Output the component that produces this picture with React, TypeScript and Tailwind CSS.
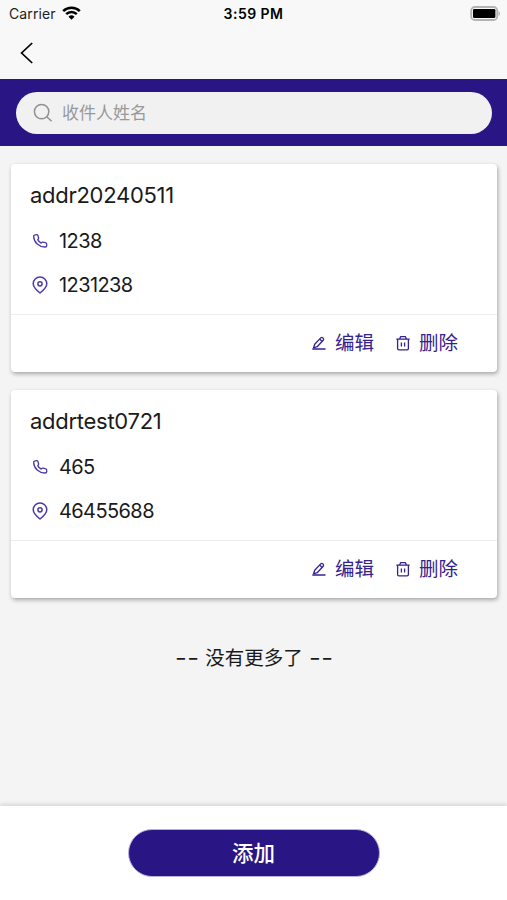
import React from 'react';

interface Address {
  id: number;
  name: string;
  phone: string;
  detail: string;
}

const addresses: Address[] = [
  { id: 1, name: 'addr20240511', phone: '1238', detail: '1231238' },
  { id: 2, name: 'addrtest0721', phone: '465', detail: '46455688' },
];

function StatusBar() {
  return (
    <div className="grid h-7 grid-cols-3 items-center pl-[9px] pr-[6px] text-black">
      <div className="flex items-center gap-[6px]">
        <span className="text-[14px] leading-7 tracking-[0.1px] text-[#222]">Carrier</span>
        <svg className="mb-[2px]" width="19" height="14" viewBox="0 0 19 14" fill="none" stroke="currentColor" strokeWidth="2.5">
          <path d="M1.2 5.1a11.8 11.8 0 0 1 16.6 0" />
          <path d="M4.2 8.2a7.5 7.5 0 0 1 10.6 0" />
          <path d="M9.5 13.8 6.5 10.7a4.3 4.3 0 0 1 6 0z" fill="currentColor" stroke="none" />
        </svg>
      </div>
      <span className="-ml-[3px] text-center text-[14px] leading-7 font-semibold tracking-[0.45px]">3:59 PM</span>
      <svg className="mb-[2px] justify-self-end" width="31" height="15" viewBox="0 0 31 15">
        <rect x="1.2" y="1" width="26" height="13" rx="3.6" fill="#f8f8f8" stroke="#b3b3b3" strokeWidth="1.8" />
        <rect x="3" y="3" width="22.4" height="9" rx="1.2" fill="#000" />
        <path d="M28.5 5.2c2 .8 2 3.8 0 4.6z" fill="#b3b3b3" />
      </svg>
    </div>
  );
}

function PhoneIcon() {
  return (
    <svg width="16" height="16" viewBox="0 0 16 16" fill="none" stroke="currentColor" strokeWidth="1.3" strokeLinejoin="round">
      <path d="M2.4 2.1 4.6 1.6Q5.5 1.5 5.8 2.3L6.6 4.8Q6.8 5.5 6.3 6L5.7 6.6Q6.8 8.9 9.2 10.1L9.9 9.4Q10.5 9 11.2 9.2L13.8 9.9Q14.7 10.2 14.7 11.1V12.6Q14.6 13.9 13.2 14C7 14.2 2 9.5 1.6 3.4Q1.6 2.4 2.4 2.1Z" />
    </svg>
  );
}

function PinIcon() {
  return (
    <svg width="16" height="18" viewBox="0 0 16 18" fill="none" stroke="currentColor" strokeWidth="1.5" strokeLinejoin="round">
      <path d="M8 17Q1.2 11.9 1.2 7.6a6.8 6.6 0 0 1 13.6 0Q14.8 11.9 8 17Z" />
      <circle cx="8" cy="7.8" r="2.1" />
    </svg>
  );
}

function EditIcon() {
  return (
    <svg className="mb-[2px]" width="16" height="16" viewBox="0 0 16 16" fill="none" stroke="currentColor" strokeWidth="1.3" strokeLinejoin="round">
      <path d="M2.6 12.8 3.7 9.3 9.7 2.9Q10.7 2 11.7 2.8L12.3 3.4Q13 4.3 12.2 5.2L6.2 11.7Z" />
      <path d="m8.8 4.2 2.3 2.2M1.3 14h13.2" />
    </svg>
  );
}

function TrashIcon() {
  return (
    <svg className="mb-[2px]" width="16" height="16" viewBox="0 0 16 16" fill="none" stroke="currentColor" strokeWidth="1.3" strokeLinejoin="round">
      <path d="M1.3 4.2h13.4M4.6 4 5.7 1.6h4.6L11.4 4M2.6 4.4v9.2Q2.6 14.9 3.9 14.9h8.2q1.3 0 1.3-1.3V4.4M6.4 7.4v4.2M9.6 7.4v4.2" />
    </svg>
  );
}

function AddressCard({ address }: { address: Address }) {
  return (
    <div className="h-[208px] rounded-[4px] bg-white shadow-[1px_2px_4px_rgba(0,0,0,0.32)]">
      <div className="flex h-[151px] flex-col border-b border-[#eeeeee] pl-5 pt-[15px]">
        <h2 className="-ml-px text-[22px] leading-8 tracking-[-0.28px] text-[#1a1a1a]">{address.name}</h2>
        <div className="mt-[8px] flex h-11 items-center gap-[10px]">
          <span className="flex w-[18px] justify-center text-[#4b3ca5]">
            <PhoneIcon />
          </span>
          <span className="text-[20px] tracking-[-0.6px] text-[#1a1a1a]">{address.phone}</span>
        </div>
        <div className="flex h-11 items-center gap-[10px]">
          <span className="flex w-[18px] justify-center text-[#4b3ca5]">
            <PinIcon />
          </span>
          <span className="text-[20px] tracking-[-0.6px] text-[#1a1a1a]">{address.detail}</span>
        </div>
      </div>
      <div className="flex h-[57px] items-center justify-end gap-[21px] pr-[39px] text-[#35228f]">
        <button className="flex items-center gap-2 text-[19.5px]">
          <EditIcon />
          <span className="pt-px">编辑</span>
        </button>
        <button className="flex items-center gap-2 text-[19.5px]">
          <TrashIcon />
          <span className="pt-px">删除</span>
        </button>
      </div>
    </div>
  );
}

export default function App() {
  return (
    <div className="flex h-[900px] w-[507px] flex-col overflow-hidden bg-[#f4f4f4] font-['Inter','Noto_Sans_CJK_SC',sans-serif]">
      <header className="h-[79px] shrink-0 bg-[#f8f8f8]">
        <StatusBar />
        <button className="ml-5 mt-[14px] block text-black">
          <svg width="14" height="22" viewBox="0 0 14 22" fill="none" stroke="currentColor" strokeWidth="1.7">
            <path d="M12.2 1 1.6 11l10.6 10" />
          </svg>
        </button>
      </header>

      {/* Search */}
      <div className="h-[67px] shrink-0 bg-[#2a1585] pl-4 pr-[15px] pt-[13px]">
        <div className="flex h-[42px] items-center gap-[10px] rounded-full bg-[#f1f1f1] pl-[17px]">
          <svg width="20" height="20" viewBox="0 0 20 20" fill="none" stroke="#909090" strokeWidth="1.5">
            <circle cx="8.6" cy="8.6" r="7.2" />
            <path d="m13.8 13.8 4.8 4.4" />
          </svg>
          <span className="-ml-px pt-[2px] text-[17px] text-[#999999]">收件人姓名</span>
        </div>
      </div>

      {/* Address list */}
      <main className="flex grow flex-col gap-[18px] pl-[11px] pr-[10px] pt-[18px]">
        {addresses.map((address) => (
          <AddressCard key={address.id} address={address} />
        ))}
        <p className="mt-[26px] flex h-8 items-center justify-center gap-[6px] text-[19.5px] leading-8 text-[#1a1a1a]">
          <span className="text-[27px] leading-8 font-light">--</span>
          <span>没有更多了</span>
          <span className="text-[27px] leading-8 font-light">--</span>
        </p>
      </main>

      <footer className="h-[94px] shrink-0 bg-white pt-[23px] shadow-[0_-2px_4px_rgba(0,0,0,0.12)]">
        <button className="mx-auto block h-12 w-[252px] rounded-full border border-[#b9b2dc] bg-[#2a1585] pt-px text-[21.5px] font-medium text-white">
          添加
        </button>
      </footer>
    </div>
  );
}
